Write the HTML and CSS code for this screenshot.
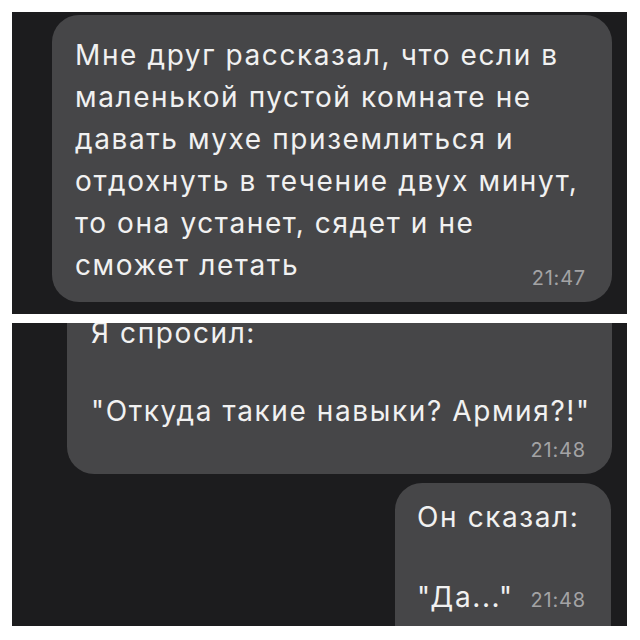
FILE: index.html
```html
<!DOCTYPE html>
<html lang="ru">
<head>
<meta charset="utf-8">
<title>Переписка</title>
<link rel="stylesheet" href="styles.css">
</head>
<body>
  <main class="sheet">
    <section class="panel panel-top">
      <div class="bubble bubble-first">
        <p class="msg">Мне друг рассказал, что если в маленькой пустой комнате не давать мухе приземлиться и отдохнуть в течение двух минут, то она устанет, сядет и не сможет летать</p>
        <div class="time time-under">21:47</div>
      </div>
    </section>
    <section class="panel panel-bottom">
      <div class="bubble bubble-question">
        <p class="msg">Я спросил:<br><br>"Откуда такие навыки? Армия?!"</p>
        <div class="time time-line">21:48</div>
      </div>
      <div class="bubble bubble-answer">
        <p class="msg">Он сказал:<br><br></p>
        <div class="last-line">
          <span class="msg-inline">"Да..."</span>
          <span class="time">21:48</span>
        </div>
      </div>
    </section>
  </main>
</body>
</html>
```
FILE: styles.css
```css
html, body {
  margin: 0;
  padding: 0;
  background: #ffffff;
}

.sheet {
  width: 615px;
  padding: 12px 13px 0 12px;
  display: flex;
  flex-direction: column;
  gap: 9px;
  font-family: Inter, "Liberation Sans", Arial, sans-serif;
}

.panel {
  background: #1c1c1e;
  overflow: hidden;
  display: flex;
  flex-direction: column;
}

.panel-top {
  height: 302px;
}

.panel-bottom {
  height: 303px;
  gap: 9px;
}

.bubble {
  background: #464648;
  border-radius: 27px;
  color: #f1f1f1;
  box-sizing: border-box;
}

.msg {
  margin: 0;
  font-size: 28px;
  letter-spacing: 1.6px;
}

.time {
  font-size: 20px;
  line-height: 24px;
  letter-spacing: 0.8px;
  color: #a3a3a5;
}

/* first message, top panel */
.bubble-first {
  margin: 3px 15px 0 40px;
  padding: 19px 18px 12px 23px;
}

.bubble-first .msg {
  line-height: 42px;
}

.time-under {
  margin: -20px 8px 0 0;
  text-align: right;
}

/* question, cut off by the top edge of the panel */
.bubble-question {
  margin: -30px 15px 0 55px;
  padding: 21px 14px 12px 24px;
  flex: none;
}

.bubble-question .msg {
  line-height: 39px;
}

.time-line {
  margin: 7px 12px 0 0;
  text-align: right;
}

/* answer, runs past the bottom edge */
.bubble-answer {
  align-self: flex-end;
  width: 216px;
  margin-right: 16px;
  padding: 14px 25px 40px 22px;
  flex: none;
}

.bubble-answer .msg {
  line-height: 40px;
}

.last-line {
  display: flex;
  justify-content: space-between;
  align-items: baseline;
  line-height: 40px;
}

.msg-inline {
  font-size: 28px;
  letter-spacing: 1.6px;
}
```
